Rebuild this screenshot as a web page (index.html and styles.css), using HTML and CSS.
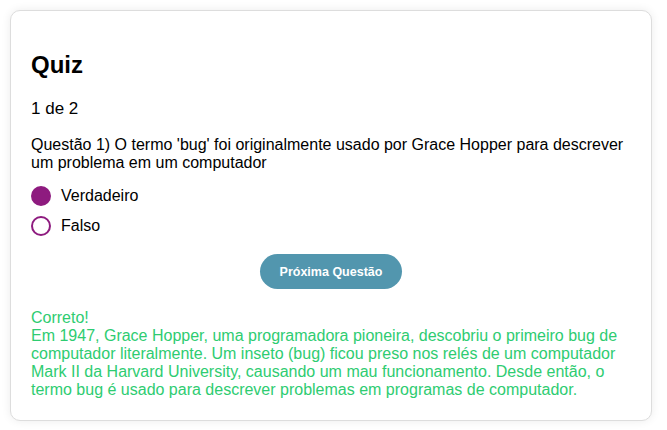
FILE: index.html
```html
<!DOCTYPE html>
<html lang="pt-BR">
<head>
<meta charset="utf-8">
<link rel="stylesheet" href="styles.css">
</head>
<body>
<div class="card">
  <h2 class="title">Quiz</h2>
  <p class="counter">1 de 2</p>
  <p class="question">Questão 1) O termo 'bug' foi originalmente usado por Grace Hopper para descrever um problema em um computador</p>
  <div class="options">
    <label class="option"><input type="radio" name="q" checked><span>Verdadeiro</span></label>
    <label class="option"><input type="radio" name="q"><span>Falso</span></label>
  </div>
  <div class="actions"><button class="next">Próxima Questão</button></div>
  <div class="feedback">Correto!<br>Em 1947, Grace Hopper, uma programadora pioneira, descobriu o primeiro bug de computador literalmente. Um inseto (bug) ficou preso nos relés de um computador Mark II da Harvard University, causando um mau funcionamento. Desde então, o termo bug é usado para descrever problemas em programas de computador.</div>
</div>
</body>
</html>
```
FILE: styles.css
```css
html, body {
  margin: 0;
  background: #fff;
}
body {
  padding: 10px;
  font-family: "Liberation Sans", Arial, sans-serif;
  color: #000;
}
.card {
  width: 600px;
  padding: 20px 20px 21px;
  border: 1px solid #ddd;
  border-radius: 10px;
  box-shadow: 0 0 10px rgba(0, 0, 0, 0.08);
  background: #fff;
}
.title {
  font-size: 24px;
  font-weight: bold;
  margin: 20px 0 20px;
}
.counter {
  font-size: 17px;
  margin: 0 0 17px;
}
.question {
  font-size: 16px;
  margin: 0 0 14px;
}
.options {
  display: flex;
  flex-direction: column;
  gap: 10px;
}
.option {
  display: flex;
  align-items: center;
  gap: 10px;
  font-size: 16px;
  cursor: pointer;
}
.option input {
  appearance: none;
  -webkit-appearance: none;
  margin: 0;
  width: 20px;
  height: 20px;
  border: 2px solid #8e1b7f;
  border-radius: 50%;
  box-sizing: border-box;
  background: #fff;
}
.option input:checked {
  background: #8e1b7f;
}
.actions {
  display: flex;
  justify-content: center;
  margin-top: 18px;
}
.next {
  background: #5296ae;
  color: #fff;
  border: none;
  border-radius: 18px;
  height: 35px;
  width: 142px;
  font-family: "Liberation Sans", Arial, sans-serif;
  font-size: 12.5px;
  font-weight: bold;
}
.feedback {
  margin-top: 20px;
  color: #2ecc71;
  font-size: 16px;
  line-height: 18px;
}
```
